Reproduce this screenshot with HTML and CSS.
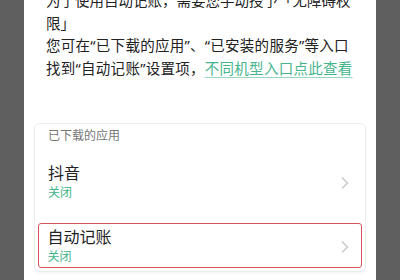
FILE: index.html
```html
<!DOCTYPE html>
<html lang="zh-CN">
<head>
<meta charset="utf-8">
<link rel="stylesheet" href="styles.css">
</head>
<body>
<div class="panel">
  <div class="intro">
    <p class="line">为了使用自动记账，需要您手动授予「无障碍权限」</p>
    <p class="line line-spaced">您可在“已下载的应用”、“已安装的服务”等入口找到“自动记账”设置项，<span class="link">不同机型入口点此查看</span></p>
  </div>
  <div class="card">
    <div class="card-head">已下载的应用</div>
    <div class="row">
      <div class="row-text">
        <div class="title">抖音</div>
        <div class="status">关闭</div>
      </div>
      <svg class="chev" width="10" height="14" viewBox="0 0 10 14"><path d="M2 1.5 L7.5 7 L2 12.5" fill="none" stroke="#c9c9c9" stroke-width="1.5"/></svg>
    </div>
    <div class="row row-hl">
      <div class="row-text">
        <div class="title">自动记账</div>
        <div class="status">关闭</div>
      </div>
      <svg class="chev" width="10" height="14" viewBox="0 0 10 14"><path d="M2 1.5 L7.5 7 L2 12.5" fill="none" stroke="#c9c9c9" stroke-width="1.5"/></svg>
    </div>
  </div>
</div>
</body>
</html>
```

FILE: styles.css
```css
html, body {
  margin: 0;
  padding: 0;
  height: 100%;
}
body {
  background: #5f5f5f;
  font-family: "Noto Sans", "Noto Sans CJK SC", sans-serif;
  overflow: hidden;
}
.panel {
  width: 352px;
  height: 100%;
  margin: 0 24px;
  background: #ffffff;
  overflow: hidden;
}
.intro {
  margin-top: -11px;
  padding-left: 22px;
  width: 310px;
  font-size: 14.5px;
  line-height: 22.5px;
  color: #222222;
}
.line {
  margin: 0;
}
.line-spaced {
  letter-spacing: 0.28px;
}
.link {
  color: #46b48c;
  text-decoration: underline;
  text-decoration-color: #9ad6bf;
  text-underline-offset: 3px;
}
.card {
  margin: 44px 10px 0 10px;
  border: 1px solid #ededed;
  border-radius: 6px;
  box-shadow: 0 1px 3px rgba(0,0,0,0.05);
  padding-bottom: 3px;
}
.card-head {
  padding: 3px 13px 0;
  font-size: 12px;
  line-height: 18px;
  color: #777777;
}
.row {
  display: flex;
  align-items: center;
  justify-content: space-between;
  padding: 17px 15px 0 13px;
}
.row-hl {
  margin: 21px 3px 0 3px;
  padding: 1.5px 11px 1.5px 8.5px;
  border: 1.5px solid #d9545a;
  border-radius: 3px;
}
.title {
  font-size: 16px;
  line-height: 22px;
  color: #222222;
}
.status {
  font-size: 12px;
  line-height: 18px;
  color: #3fb489;
}
.chev {
  display: block;
  margin-top: 2px;
}
```
